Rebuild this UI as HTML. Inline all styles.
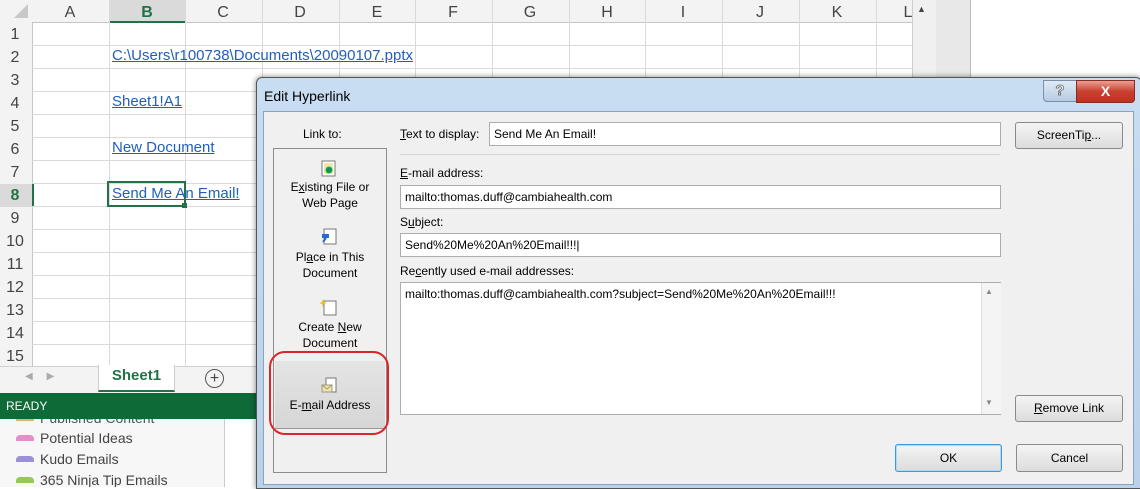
<!DOCTYPE html><html><head><style>
body{margin:0;width:1140px;height:487px;overflow:hidden;background:#fff;position:relative;font-family:"Liberation Sans",sans-serif}
.a{position:absolute}
.hl{color:#1f5fbf;text-decoration:underline;font-size:15px}
.d{font-size:12px;color:#000}
.btn{position:absolute;border:1px solid #8a8a8a;border-radius:3px;background:linear-gradient(#f4f4f4,#dcdcdc);font-size:12px;text-align:center;box-sizing:border-box}
.inp{position:absolute;background:#fff;border:1px solid #abadb3;box-sizing:border-box;font-size:12px;padding-left:4px}
</style></head><body>
<div class="a" style="left:0;top:0;width:970px;height:393px;background:#fff"></div>
<div class="a" style="left:0;top:0;width:912px;height:22px;background:#f3f3f3;border-bottom:1px solid #c6c6c6"></div>
<div class="a" style="left:109px;top:0;width:76px;height:21px;background:#dadada;border-bottom:2px solid #217346"></div>
<div class="a" style="left:0;top:22px;width:32px;height:344px;background:#f3f3f3;border-right:1px solid #c6c6c6"></div>
<div class="a" style="left:0;top:184px;width:32px;height:23px;background:#dadada;border-right:2px solid #217346"></div>
<svg class="a" style="left:0;top:0" width="912" height="366">
<g stroke="#dadada" stroke-width="1">
<line x1="32" y1="45.5" x2="912" y2="45.5"/><line x1="32" y1="68.5" x2="912" y2="68.5"/><line x1="32" y1="91.5" x2="912" y2="91.5"/><line x1="32" y1="114.5" x2="912" y2="114.5"/><line x1="32" y1="137.5" x2="912" y2="137.5"/><line x1="32" y1="160.5" x2="912" y2="160.5"/><line x1="32" y1="183.5" x2="912" y2="183.5"/><line x1="32" y1="206.5" x2="912" y2="206.5"/><line x1="32" y1="229.5" x2="912" y2="229.5"/><line x1="32" y1="252.5" x2="912" y2="252.5"/><line x1="32" y1="275.5" x2="912" y2="275.5"/><line x1="32" y1="298.5" x2="912" y2="298.5"/><line x1="32" y1="321.5" x2="912" y2="321.5"/><line x1="32" y1="344.5" x2="912" y2="344.5"/>
<line x1="109.5" y1="0" x2="109.5" y2="366"/><line x1="185.5" y1="0" x2="185.5" y2="366"/><line x1="262.5" y1="0" x2="262.5" y2="366"/><line x1="339.5" y1="0" x2="339.5" y2="366"/><line x1="415.5" y1="0" x2="415.5" y2="366"/><line x1="492.5" y1="0" x2="492.5" y2="366"/><line x1="569.5" y1="0" x2="569.5" y2="366"/><line x1="645.5" y1="0" x2="645.5" y2="366"/><line x1="722.5" y1="0" x2="722.5" y2="366"/><line x1="799.5" y1="0" x2="799.5" y2="366"/><line x1="876.5" y1="0" x2="876.5" y2="366"/>
</g>
<polygon points="28,4 28,18 14,18" fill="#c8c8c8"/>
<g font-family="Liberation Sans" font-size="16" fill="#444" text-anchor="middle">
<text x="70" y="17">A</text><text x="147" y="17" fill="#217346" font-weight="bold">B</text><text x="223" y="17">C</text><text x="300" y="17">D</text><text x="377" y="17">E</text><text x="453" y="17">F</text><text x="530" y="17">G</text><text x="607" y="17">H</text><text x="683" y="17">I</text><text x="760" y="17">J</text><text x="837" y="17">K</text><text x="908" y="17">L</text>
<text x="15" y="39">1</text><text x="15" y="62">2</text><text x="15" y="85">3</text><text x="15" y="108">4</text><text x="15" y="131">5</text><text x="15" y="154">6</text><text x="15" y="177">7</text><text x="15" y="200" fill="#217346" font-weight="bold">8</text><text x="15" y="223">9</text><text x="15" y="246">10</text><text x="15" y="269">11</text><text x="15" y="292">12</text><text x="15" y="315">13</text><text x="15" y="338">14</text><text x="15" y="361">15</text>
</g>
<rect x="108" y="182" width="77" height="24" fill="none" stroke="#217346" stroke-width="2"/>
<rect x="182" y="203" width="5" height="5" fill="#217346"/>
</svg>
<div class="a hl" style="left:112px;top:47px">C:\Users\r100738\Documents\20090107.pptx</div>
<div class="a hl" style="left:112px;top:93px">Sheet1!A1</div>
<div class="a hl" style="left:112px;top:139px">New Document</div>
<div class="a hl" style="left:112px;top:185px">Send Me An Email!</div>
<div class="a" style="left:912px;top:0;width:23px;height:366px;background:#f0f0f0;border-left:1px solid #ccc;border-right:1px solid #bbb"></div>
<div class="a" style="left:917px;top:4px;font-size:9px;color:#444">▲</div>
<div class="a" style="left:936px;top:0;width:34px;height:393px;background:#e8e8e8;border-right:1px solid #bbb"></div>
<div class="a" style="left:0;top:366px;width:936px;height:27px;background:#f3f3f3;border-top:1px solid #d0d0d0"></div>
<div class="a" style="left:25px;top:371px;font-size:10px;color:#aaa">◀&nbsp;&nbsp;&nbsp;&nbsp;&nbsp;▶</div>
<div class="a" style="left:98px;top:365px;width:75px;height:25px;background:#fff;border:1px solid #ccc;border-top:none;border-bottom:2px solid #217346;color:#217346;font-weight:bold;font-size:15px;text-align:center;line-height:22px">Sheet1</div>
<div class="a" style="left:205px;top:369px;width:17px;height:17px;border:1.5px solid #555;border-radius:50%;text-align:center;line-height:17px;font-size:16px;color:#444">+</div>
<div class="a" style="left:0;top:393px;width:256px;height:26px;background:#0e6a37;color:#fff;font-size:12px;line-height:26px;padding-left:6px;box-sizing:border-box">READY</div>
<div class="a" style="left:0;top:419px;width:224px;height:68px;background:#f7f7f7;border-right:1px solid #ccc;overflow:hidden">
<div class="a" style="left:40px;top:-9px;font-size:14px;color:#555">Published Content</div>
<div class="a" style="left:16px;top:-2px;width:18px;height:4px;background:#e8b070"></div>
<div class="a" style="left:16px;top:16px;width:18px;height:6px;background:#e38fc9;border-radius:4px 4px 0 0"></div>
<div class="a" style="left:40px;top:11px;font-size:14px;color:#444">Potential Ideas</div>
<div class="a" style="left:16px;top:37px;width:18px;height:6px;background:#9a8fd8;border-radius:4px 4px 0 0"></div>
<div class="a" style="left:40px;top:32px;font-size:14px;color:#444">Kudo Emails</div>
<div class="a" style="left:16px;top:58px;width:18px;height:6px;background:#94c95a;border-radius:4px 4px 0 0"></div>
<div class="a" style="left:40px;top:53px;font-size:14px;color:#444">365 Ninja Tip Emails</div>
</div>
<div class="a" style="left:256px;top:77px;width:886px;height:412px;background:linear-gradient(#c9ddf2,#b9d1ea);border:1px solid #555;border-radius:6px 6px 0 0;box-sizing:border-box;box-shadow:0 0 6px rgba(0,0,0,.5)"></div>
<div class="a" style="left:264px;top:88px;font-size:14px;color:#000">Edit Hyperlink</div>
<div class="a" style="left:1043px;top:80px;width:32px;height:20px;border:1px solid #7a8ea8;border-radius:0 0 0 4px;background:linear-gradient(#e0eaf6,#b8cbe2);text-align:center;font-size:15px;color:#fff;font-weight:bold;line-height:20px;-webkit-text-stroke:0.7px #555">?</div>
<div class="a" style="left:1076px;top:80px;width:57px;height:21px;border:1px solid #8a2a20;border-radius:0 0 4px 0;background:linear-gradient(#e8a193,#c9412f 50%,#c03020);text-align:center;color:#fff;font-weight:bold;font-size:14px;line-height:20px">X</div>
<div class="a" style="left:263px;top:111px;width:871px;height:374px;background:#f0f0f0;border:1px solid #8ba2bd;box-sizing:border-box"></div>
<div class="a d" style="left:303px;top:127px">Link to:</div>
<div class="a" style="left:273px;top:148px;width:114px;height:325px;border:1px solid #8c8c8c;box-sizing:border-box;background:#f0f0f0"></div>
<svg class="a" style="left:320px;top:160px" width="18" height="18"><rect x="2" y="1" width="13" height="15" fill="#fff" stroke="#777"/><rect x="4" y="3" width="9" height="11" fill="#efe7a8"/><circle cx="9" cy="10" r="3" fill="#1a8a5a" stroke="#0b4"/></svg>
<div class="a d" style="left:275px;top:179px;width:110px;text-align:center;line-height:16px">E<u>x</u>isting File or<br>Web Page</div>
<svg class="a" style="left:320px;top:228px" width="18" height="18"><rect x="4" y="1" width="12" height="15" fill="#fff" stroke="#777"/><path d="M2 6h7v4H2z" fill="#2a6ad0"/><path d="M6 10l-3 4" stroke="#2a6ad0" stroke-width="2"/></svg>
<div class="a d" style="left:275px;top:249px;width:110px;text-align:center;line-height:16px">Pl<u>a</u>ce in This<br>Document</div>
<svg class="a" style="left:320px;top:298px" width="18" height="18"><rect x="4" y="3" width="12" height="14" fill="#fff" stroke="#777"/><path d="M3 1l1 3 3 1-3 1-1 3-1-3-3-1 3-1z" fill="#e8c020"/></svg>
<div class="a d" style="left:275px;top:319px;width:110px;text-align:center;line-height:16px">Create <u>N</u>ew<br>Document</div>
<div class="a" style="left:275px;top:361px;width:110px;height:68px;background:linear-gradient(#e4e4e4,#d6d6d6);border-bottom:1px solid #999;box-sizing:border-box"></div>
<svg class="a" style="left:320px;top:377px" width="18" height="18"><rect x="6" y="1" width="10" height="14" fill="#fff" stroke="#777"/><rect x="2" y="8" width="10" height="7" fill="#f5e4a0" stroke="#998"/><path d="M2 8l5 4 5-4" stroke="#998" fill="none"/></svg>
<div class="a d" style="left:275px;top:398px;width:110px;text-align:center">E-<u>m</u>ail Address</div>
<div class="a" style="left:269px;top:351px;width:120px;height:84px;border:2px solid #d9262a;border-radius:16px;box-sizing:border-box"></div>
<div class="a d" style="left:400px;top:127px"><u>T</u>ext to display:</div>
<div class="inp" style="left:489px;top:122px;width:512px;height:24px;line-height:22px">Send Me An Email!</div>
<div class="btn" style="left:1015px;top:122px;width:108px;height:27px;line-height:25px">ScreenTi<u>p</u>...</div>
<div class="a" style="left:400px;top:154px;width:600px;height:1px;background:#d5d5d5"></div>
<div class="a d" style="left:400px;top:166px"><u>E</u>-mail address:</div>
<div class="inp" style="left:400px;top:185px;width:601px;height:24px;line-height:22px">mailto:thomas.duff@cambiahealth.com</div>
<div class="a d" style="left:400px;top:215px">S<u>u</u>bject:</div>
<div class="inp" style="left:400px;top:233px;width:601px;height:24px;line-height:22px">Send%20Me%20An%20Email!!!|</div>
<div class="a d" style="left:400px;top:264px">Re<u>c</u>ently used e-mail addresses:</div>
<div class="inp" style="left:400px;top:282px;width:601px;height:133px;padding:4px"><span>mailto:thomas.duff@cambiahealth.com?subject=Send%20Me%20An%20Email!!!</span></div>
<div class="a" style="left:981px;top:283px;width:19px;height:131px;background:#f4f4f4;border-left:1px solid #e0e0e0"></div>
<div class="a" style="left:985px;top:287px;font-size:8px;color:#888">▲</div>
<div class="a" style="left:985px;top:398px;font-size:8px;color:#888">▼</div>
<div class="btn" style="left:1015px;top:395px;width:108px;height:27px;line-height:25px"><u>R</u>emove Link</div>
<div class="btn" style="left:895px;top:444px;width:107px;height:28px;line-height:26px;border:1px solid #3c9ad8;box-shadow:inset 0 0 0 1px #a8dcf8">OK</div>
<div class="btn" style="left:1016px;top:444px;width:107px;height:28px;line-height:26px">Cancel</div>
</body></html>
